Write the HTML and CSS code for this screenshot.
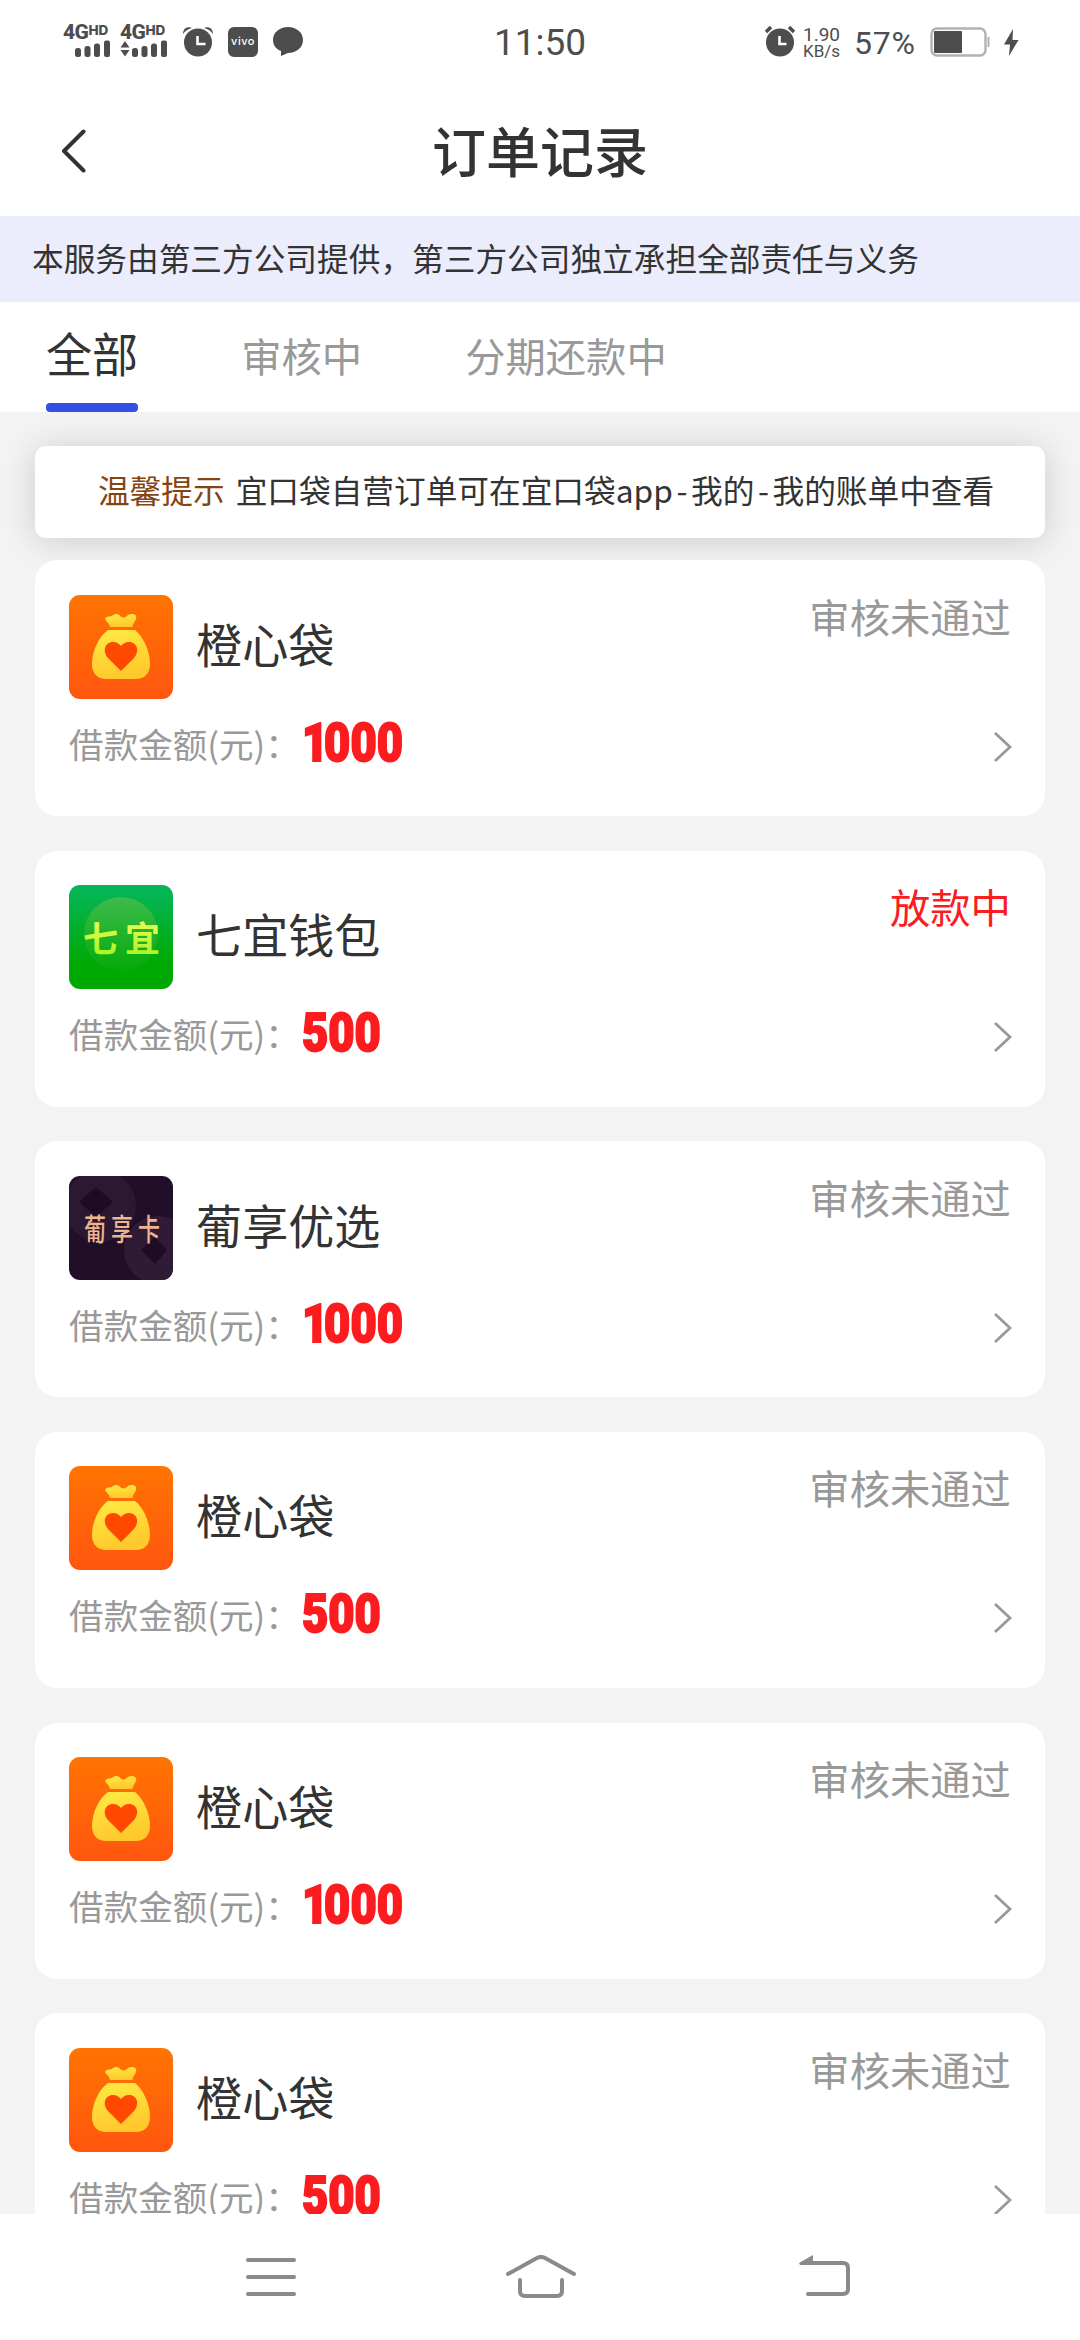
FILE: index.html
```
<!DOCTYPE html>
<html lang="zh-CN">
<head>
<meta charset="utf-8">
<title>订单记录</title>
<link rel="stylesheet" href="styles.css">
</head>
<body>
<svg class="defs" width="0" height="0" aria-hidden="true">
  <defs>
    <linearGradient id="orange" x1="0" y1="0" x2="0" y2="1"><stop offset="0" stop-color="#ff7402"/><stop offset="1" stop-color="#ff560f"/></linearGradient>
    <linearGradient id="gold" x1="0" y1="0" x2="0.3" y2="1"><stop offset="0" stop-color="#ffec45"/><stop offset="1" stop-color="#ffc92c"/></linearGradient>
    <linearGradient id="green" x1="0" y1="0" x2="0" y2="1"><stop offset="0" stop-color="#05b65c"/><stop offset="0.75" stop-color="#00aa05"/><stop offset="1" stop-color="#00a800"/></linearGradient>
    <linearGradient id="disc" x1="0" y1="0" x2="0" y2="1"><stop offset="0" stop-color="#3dbb4d"/><stop offset="1" stop-color="#04ab08"/></linearGradient>
    <linearGradient id="lime" x1="0" y1="0" x2="0" y2="1"><stop offset="0" stop-color="#ffff62"/><stop offset="1" stop-color="#9cf21c"/></linearGradient>
    <symbol id="bag" viewBox="0 0 104 104">
      <rect width="104" height="104" fill="url(#orange)"/>
      <path fill="url(#gold)" d="M41 32c-1-4-3-5-4.500-7c-1-2 1-3.500 4-3.500c3 0 3.500-2.500 7-2.500c3 0 4 3.500 7 3.500c3 0 4-3.500 8-3.500c4 0 5.500 2 4.500 5c-1 3-3 4-3.500 8Z"/>
      <path fill="url(#gold)" d="M39 35H66c8 6 15 21 15 34c0 10-6 15-14 15H37c-8 0-14-5-14-15c0-13 7-28 16-34Z"/>
      <path fill="#ff4800" d="M52 76L39 63c-6-7-3-16 5-16c4 0 6 2 8 4c2-2 4-4 8-4c8 0 11 9 5 16Z"/>
    </symbol>
    <symbol id="chevron" viewBox="0 0 20 32"><path d="M2 2L17 16L2 30" fill="none" stroke="#999" stroke-width="2.800"/></symbol>
    <symbol id="bars" viewBox="0 0 36 18"><g fill="#4d4d4d"><rect y="8" width="6" height="9" rx="2.500"/><rect x="9.500" y="6" width="6" height="11" rx="2.500"/><rect x="19" y="3.500" width="6" height="13.500" rx="2.500"/><rect x="29" y="0.500" width="6" height="16.500" rx="2"/></g></symbol>
  </defs>
</svg>
<div class="screen">
  <header class="status">
    <div class="status-left">
      <div class="signal"><div class="net">4G<small>HD</small></div><svg width="36" height="18"><use href="#bars"/></svg></div>
      <div class="signal"><div class="net">4G<small>HD</small></div>
        <div class="signal-row"><svg width="10" height="16" viewBox="0 0 10 16"><path fill="#4d4d4d" d="M5 0l4.500 6.500H.500ZM5 15.500L.500 9h9Z"/></svg><svg width="36" height="18"><use href="#bars"/></svg></div></div>
      <svg class="alarm" width="32" height="32" viewBox="0 0 32 32"><circle cx="16" cy="17.500" r="14" fill="#4d4d4d"/><path d="M1 9C1 4 5 1 10 3C6 4 3 6 1 9ZM31 9C31 4 27 1 22 3C26 4 29 6 31 9Z" fill="#4d4d4d"/><path d="M15.500 11v8h8" fill="none" stroke="#fff" stroke-width="2.600"/></svg>
      <div class="vivo">vivo</div>
      <svg class="bubble" width="30" height="30" viewBox="0 0 30 30"><path fill="#4d4d4d" d="M15 0C23.500 0 30 5.500 30 13S23.500 26 15 26L8 29V24C3 22 0 18 0 13C0 5.500 6.500 0 15 0Z"/></svg>
    </div>
    <div class="clock">11:50</div>
    <div class="status-right">
      <svg width="32" height="32" viewBox="0 0 32 32"><circle cx="16" cy="17.500" r="14" fill="#4d4d4d"/><path d="M2 7L7 2M30 7L25 2" stroke="#4d4d4d" stroke-width="3.500"/><path d="M15.500 11v8h7" fill="none" stroke="#fff" stroke-width="2.600"/></svg>
      <div class="speed"><span>1.90</span><span>KB/s</span></div>
      <div class="percent">57%</div>
      <svg class="battery" width="60" height="30" viewBox="0 0 60 30"><rect x="1.500" y="1.500" width="54" height="27" rx="5.500" fill="none" stroke="#b2b2b2" stroke-width="2.400"/><rect x="4" y="4" width="28" height="22" rx="1" fill="#4d4d4d"/><path d="M58.500 10v10" stroke="#b2b2b2" stroke-width="2"/></svg>
      <svg class="bolt" width="15" height="27" viewBox="0 0 15 27"><path fill="#4d4d4d" d="M9 0L0 15.500H6L5 27L14.500 11H8.500Z"/></svg>
    </div>
  </header>
  <div class="titlebar">
    <svg class="back" width="26" height="44" viewBox="0 0 26 44"><path d="M23.500 2.500L4 22L23.500 41.500" fill="none" stroke="#333" stroke-width="4" stroke-linecap="round" stroke-linejoin="round"/></svg>
    <h1>订单记录</h1>
  </div>
  <div class="banner">本服务由第三方公司提供，第三方公司独立承担全部责任与义务</div>
  <nav class="tabs"><div class="tab active">全部</div><div class="tab">审核中</div><div class="tab">分期还款中</div></nav>
  <main class="content">
    <div class="tip"><span class="tip-tag">温馨提示</span><span>宜口袋自营订单可在宜口袋app<span class="dash">-</span>我的<span class="dash">-</span>我的账单中查看</span></div>
    <div class="orders">
      <section class="card">
        <div class="top"><svg class="logo"><use href="#bag"/></svg><div class="name">橙心袋</div><div class="state">审核未通过</div></div>
        <div class="bottom"><span class="label">借款金额(元)：</span><b class="amount"><span class="one">1</span>000</b><svg class="go"><use href="#chevron"/></svg></div>
      </section>
      <section class="card">
        <div class="top"><svg class="logo" viewBox="0 0 104 104"><rect width="104" height="104" fill="url(#green)"/><circle cx="52" cy="49" r="37" fill="url(#disc)"/><text x="14" y="67" class="seven" textLength="77" fill="url(#lime)">七宜</text></svg><div class="name">七宜钱包</div><div class="state paying">放款中</div></div>
        <div class="bottom"><span class="label">借款金额(元)：</span><b class="amount">500</b><svg class="go"><use href="#chevron"/></svg></div>
      </section>
      <section class="card">
        <div class="top"><svg class="logo" viewBox="0 0 104 104"><rect width="104" height="104" fill="#210f29"/><circle cx="31" cy="30" r="36" fill="#2b1833"/><circle cx="89" cy="74" r="34" fill="#2f1b35"/><path d="M27 11L44 26L27 41L10 26ZM86 61L98 74L86 88L72 74Z" fill="#1e0c27"/><text transform="translate(15 63.500) scale(1 1.350)" class="pu" textLength="76">葡享卡</text></svg><div class="name">葡享优选</div><div class="state">审核未通过</div></div>
        <div class="bottom"><span class="label">借款金额(元)：</span><b class="amount"><span class="one">1</span>000</b><svg class="go"><use href="#chevron"/></svg></div>
      </section>
      <section class="card">
        <div class="top"><svg class="logo"><use href="#bag"/></svg><div class="name">橙心袋</div><div class="state">审核未通过</div></div>
        <div class="bottom"><span class="label">借款金额(元)：</span><b class="amount">500</b><svg class="go"><use href="#chevron"/></svg></div>
      </section>
      <section class="card">
        <div class="top"><svg class="logo"><use href="#bag"/></svg><div class="name">橙心袋</div><div class="state">审核未通过</div></div>
        <div class="bottom"><span class="label">借款金额(元)：</span><b class="amount"><span class="one">1</span>000</b><svg class="go"><use href="#chevron"/></svg></div>
      </section>
      <section class="card">
        <div class="top"><svg class="logo"><use href="#bag"/></svg><div class="name">橙心袋</div><div class="state">审核未通过</div></div>
        <div class="bottom"><span class="label">借款金额(元)：</span><b class="amount">500</b><svg class="go"><use href="#chevron"/></svg></div>
      </section>
    </div>
  </main>
  <footer class="sysnav">
    <svg width="54" height="44" viewBox="0 0 54 44"><path d="M4 5H50M4 22H50M4 39H50"/></svg>
    <svg class="home" width="72" height="44" viewBox="0 0 72 44"><path d="M3 19L32 3Q36 1 40 3L69 19M15 25V36Q15 41 20 41H52Q57 41 57 36V25"/></svg>
    <svg width="54" height="44" viewBox="0 0 54 44"><path d="M6 8H46Q51 8 51 13V34Q51 39 46 39H11"/><path class="head" d="M2 8L16 0V10H3Z"/></svg>
  </footer>
</div>
</body>
</html>
```
FILE: styles.css
```
* { box-sizing: border-box; }
body { margin: 0; background: #fff; font-family: "Noto Sans CJK SC", sans-serif; color: #333; }
svg { display: block; flex: none; }
.defs { position: absolute; }
.screen { width: 1080px; height: 2340px; overflow: hidden; display: flex; flex-direction: column; }
.screen > * { flex: none; }

.status { height: 86px; display: grid; grid-template-columns: 1fr auto 1fr; color: #4d4d4d; font-family: Roboto, sans-serif; }
.status-left { display: flex; padding: 24px 0 0 63px; }
.signal { width: 47px; display: flex; flex-direction: column; align-items: flex-end; margin-right: 10px; }
.net { width: 47px; height: 16px; font-size: 21px; line-height: 17px; font-weight: 800; display: flex; align-items: flex-start; letter-spacing: -.5px; }
.net small { font: 800 13.500px/12px Inter, sans-serif; letter-spacing: 0; }
.signal > svg { margin-right: -1px; }
.signal-row { display: flex; gap: 2px; align-items: center; margin-right: -1px; }
.alarm { margin: 1px 0 0 5px; }
.vivo { width: 30px; height: 30px; margin: 3px 0 0 14px; border-radius: 6px; background: #4d4d4d; color: #fff; font: 500 11px/28px Inter, sans-serif; letter-spacing: .5px; text-align: center; }
.bubble { margin: 3px 0 0 15px; }
.clock { font-size: 37px; font-weight: 450; line-height: 85px; }
.status-right { display: flex; justify-content: flex-end; padding: 25px 61px 0 0; }
.speed { width: 38px; margin: 1px 13px 0 7px; display: flex; flex-direction: column; font-size: 19px; line-height: 17px; }
.speed span + span { font-size: 17px; }
.percent { width: 64px; font-size: 32px; font-weight: 450; line-height: 37px; letter-spacing: .8px; margin-right: 12px; }
.battery { margin: 2px 14px 0 0; }
.bolt { margin-top: 4px; }

.titlebar { height: 130px; display: grid; grid-template-columns: 60px 1fr 60px; align-items: start; padding-top: 22px; }
.back { margin: 21px 0 0 60px; }
h1 { margin: 0; text-align: center; font-size: 54px; line-height: 83px; font-weight: 500; }
.banner { height: 86px; background: #ebedfc; padding-left: 32px; font-size: 31.680px; line-height: 82px; white-space: nowrap; }
.tabs { height: 110px; display: flex; gap: 103px; padding-left: 46px; font-size: 40.320px; line-height: 105px; color: #999; }
.active { display: flex; flex-direction: column; justify-content: space-between; font-size: 46.080px; line-height: 101px; color: #333; }
.active::after { content: ""; height: 9px; border-radius: 4px; background: #3450e2; }

.content { height: 1802px; overflow: hidden; background: #f3f3f3; padding: 34px 34.560px 0; }
.tip { height: 92px; border-radius: 11px; background: #fff; box-shadow: 0 3px 35px rgba(0, 0, 0, .16); padding-left: 63.400px; display: flex; gap: 11px; font-size: 31.680px; line-height: 87px; white-space: nowrap; }
.tip-tag { color: #864510; }
.dash { padding: 0 3.600px; }
.orders { position: relative; margin-top: 22px; display: flex; flex-direction: column; gap: 34.560px; }
.card { height: 256.100px; border-radius: 22px; background: #fff; padding: 34.560px; }
.top { display: flex; height: 104px; }
.logo { width: 104px; height: 104px; border-radius: 11px; overflow: hidden; }
.name { margin-left: 23px; font-size: 46.080px; line-height: 96px; }
.state { margin-left: auto; font-size: 40.320px; line-height: 42px; color: #999; }
.paying { color: #fc1c1f; }
.bottom { display: flex; align-items: flex-start; height: 80px; }
.label { font-size: 34.560px; line-height: 88px; color: #999; }
.amount { flex: 1; margin-left: 2px; transform: scaleX(.84); transform-origin: 0 0; font: 900 54px/87px Roboto, sans-serif; color: #fc1c1f; -webkit-text-stroke: 2px #fc1c1f; }
.one { margin-right: -5px; }
.go { width: 20px; height: 32px; margin: 32px -2px 0 0; }
.seven { font-size: 35px; font-weight: 700; }
.pu { font-size: 22px; font-weight: 500; fill: #eeb58e; }

.sysnav { height: 126px; background: #fff; display: flex; justify-content: space-between; padding: 41px 229px 0 244px; }
.sysnav path { fill: none; stroke: #8a8a8a; stroke-width: 4; stroke-linecap: round; stroke-linejoin: round; }
.home { margin-right: 14px; }
.sysnav .head { fill: #8a8a8a; stroke: none; }
```
